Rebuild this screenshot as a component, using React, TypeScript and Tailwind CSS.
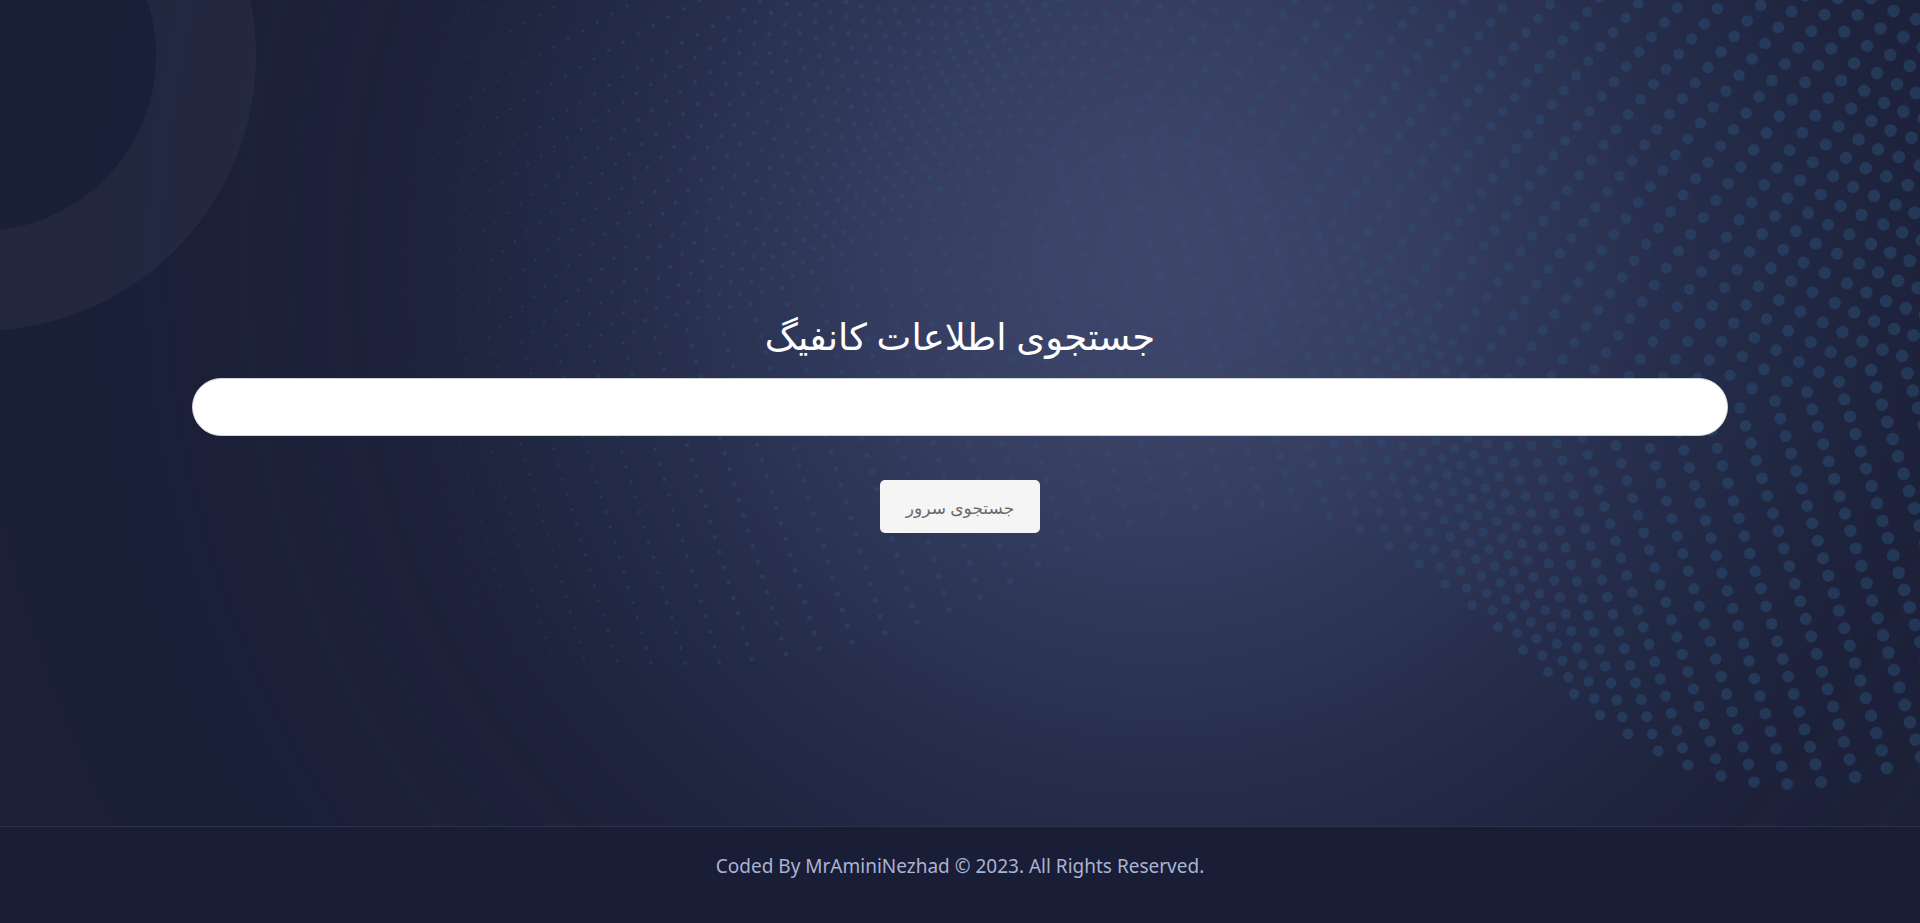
import React from "react";

type Point = [number, number];

// Each strand of the halftone wave: [fold x, fold y, lower end x, lower end y].
const strands: [number, number, number, number][] = [
  [223, 178, 317, 511], [251, 205, 345, 536], [280, 230, 374, 560], [306, 251, 400, 581],
  [335, 270, 429, 600], [363, 287, 457, 617], [393, 304, 487, 634], [424, 317, 517, 648],
  [456, 328, 550, 653], [489, 337, 584, 658], [522, 343, 617, 661], [556, 346, 651, 663],
  [590, 346, 685, 663], [623, 343, 719, 662], [655, 338, 752, 659], [687, 330, 786, 654],
  [719, 319, 819, 649], [751, 304, 852, 642], [782, 288, 885, 633], [812, 272, 917, 622],
  [842, 254, 949, 610], [871, 237, 980, 597], [900, 220, 1010, 581], [929, 203, 1038, 564],
  [958, 187, 1067, 549], [989, 172, 1098, 535], [1020, 160, 1129, 523], [1053, 150, 1162, 514],
  [1086, 143, 1195, 507], [1119, 139, 1228, 503], [1153, 140, 1262, 504], [1187, 144, 1296, 508],
  [1220, 153, 1329, 517], [1251, 165, 1360, 530], [1282, 183, 1389, 546], [1308, 201, 1419, 564],
  [1334, 223, 1445, 584], [1357, 247, 1472, 605], [1380, 272, 1498, 627], [1404, 297, 1523, 650],
  [1428, 321, 1548, 672], [1453, 343, 1574, 694], [1480, 362, 1600, 715], [1509, 378, 1628, 734],
  [1540, 392, 1658, 751], [1571, 403, 1688, 765], [1605, 411, 1721, 776], [1639, 413, 1754, 782],
  [1673, 415, 1787, 784], [1706, 413, 1821, 782], [1740, 408, 1855, 777], [1775, 401, 1887, 768],
  [1807, 392, 1921, 757], [1839, 382, 1953, 746], [1871, 370, 1985, 733], [1902, 356, 2016, 719],
];

// Steps towards the upper right, by fold position: [x, step x, step y, growth x, growth y].
const upSteps: number[][] = [
  [220, 10.7, 8.2, 0.0155, 0],
  [335, 10.7, 8.4, 0.0155, 0],
  [590, 11.1, 11, 0.011, 0.011],
  [782, 10.4, 12.9, 0.008, 0.01],
  [900, 10.1, 14, 0.009, 0.007],
  [1187, 10.3, 14, 0.009, 0.005],
  [1357, 10.6, 14.6, 0.009, -0.003],
  [1480, 11.1, 15.5, 0.009, 0],
  [1639, 12.1, 17.9, 0.004, 0],
  [1740, 12, 19.3, 0.003, 0],
  [1902, 11.5, 20.8, 0.003, 0],
  [2200, 11.5, 20.8, 0.003, 0],
];

function stepAt(x: number): number[] {
  for (let i = 1; i < upSteps.length; i++) {
    const a = upSteps[i - 1];
    const b = upSteps[i];
    if (x <= b[0]) {
      const t = (x - a[0]) / (b[0] - a[0]);
      return a.map((value, k) => value + (b[k] - value) * t).slice(1);
    }
  }
  return upSteps[upSteps.length - 1].slice(1);
}

function buildDots(): Point[] {
  const dots: Point[] = [];
  for (const [fx, fy, ex, ey] of strands) {
    for (let j = 0; j <= 21; j++) {
      dots.push([fx + ((ex - fx) * j) / 21, fy + ((ey - fy) * j) / 21]);
    }
    const [sx, sy, growX, growY] = stepAt(fx);
    let x = fx;
    let y = fy;
    for (let j = 0; j < 36 && y > -8; j++) {
      x += sx * (1 + growX * j);
      y -= sy * (1 + growY * j);
      dots.push([x, y]);
    }
  }
  return dots.filter(([x, y]) => x < 1930 && y > -8);
}

const dots = buildDots();

function dotOpacity(x: number, y: number) {
  const fromGlow = Math.min(1, Math.hypot(x - 1160, y - 270) / 650);
  const lowFade = Math.max(0, y - 420) * 0.5;
  const leftFade = Math.max(0, Math.min(1, (x - 220 - lowFade) / 460));
  return (0.14 + 0.25 * fromGlow) * leftFade;
}

function Backdrop() {
  return (
    <svg
      aria-hidden="true"
      className="absolute inset-0 h-full w-full"
      viewBox="0 0 1920 826"
      preserveAspectRatio="xMidYMid slice"
    >
      <defs>
        <radialGradient id="glow" gradientUnits="userSpaceOnUse" cx="1160" cy="260" r="1200">
          <stop offset="0" stopColor="#3e476b" />
          <stop offset="0.1" stopColor="#3b4468" />
          <stop offset="0.22" stopColor="#353d61" />
          <stop offset="0.32" stopColor="#2e3657" />
          <stop offset="0.4" stopColor="#29304f" />
          <stop offset="0.46" stopColor="#252c49" />
          <stop offset="0.53" stopColor="#212843" />
          <stop offset="0.6" stopColor="#1f243e" />
          <stop offset="0.66" stopColor="#1d213b" />
          <stop offset="0.675" stopColor="#1c2139" />
          <stop offset="0.685" stopColor="#1e233b" />
          <stop offset="0.7" stopColor="#1c203a" />
          <stop offset="0.717" stopColor="#1c203a" />
          <stop offset="0.722" stopColor="#1b2337" />
          <stop offset="0.73" stopColor="#1c213a" />
          <stop offset="0.75" stopColor="#1c2138" />
          <stop offset="0.765" stopColor="#1c2237" />
          <stop offset="0.785" stopColor="#1b1f38" />
          <stop offset="0.825" stopColor="#1b1f39" />
          <stop offset="0.838" stopColor="#1a213b" />
          <stop offset="0.852" stopColor="#1a1f39" />
          <stop offset="1" stopColor="#1b1f38" />
        </radialGradient>
      </defs>
      <rect width="1920" height="826" fill="url(#glow)" />
      <circle cx="-20" cy="55" r="226" fill="none" stroke="#ffffff" strokeOpacity="0.04" strokeWidth="100" />
      <g fill="#2f5a84">
        {dots.map(([x, y], i) => (
          <circle
            key={i}
            cx={x.toFixed(1)}
            cy={y.toFixed(1)}
            r={Math.max(0.8, 0.9 + (x - 380) * 0.0036).toFixed(2)}
            fillOpacity={dotOpacity(x, y).toFixed(3)}
          />
        ))}
      </g>
    </svg>
  );
}

export default function App() {
  return (
    <div className="flex min-h-screen flex-col bg-[#191d36] font-['Noto_Sans','DejaVu_Sans',sans-serif]">
      <main className="relative isolate flex flex-1 flex-col overflow-hidden">
        <Backdrop />
        <form
          dir="rtl"
          className="relative flex flex-1 flex-col items-center justify-center"
          onSubmit={(event) => event.preventDefault()}
        >
          <label htmlFor="config" className="py-3 text-[37px] leading-[60px] text-white">
            جستجوی اطلاعات کانفیگ
          </label>
          <input
            id="config"
            type="text"
            className="h-[58px] w-4/5 rounded-full border border-[#ced4da] bg-white px-6 text-xl text-gray-700 outline-none"
          />
          <button
            type="submit"
            className="mt-11 h-[53px] w-40 rounded-[5px] bg-[#f5f5f5] pt-1 text-[17px] text-[#6b6b6b]"
          >
            جستجوی سرور
          </button>
        </form>
      </main>
      <footer className="border-t border-[#2f3347] pt-[23px] pb-[41px] text-center text-[19px] leading-8 text-[#a9b3d3]">
        Coded By MrAminiNezhad © 2023. All Rights Reserved.
      </footer>
    </div>
  );
}
